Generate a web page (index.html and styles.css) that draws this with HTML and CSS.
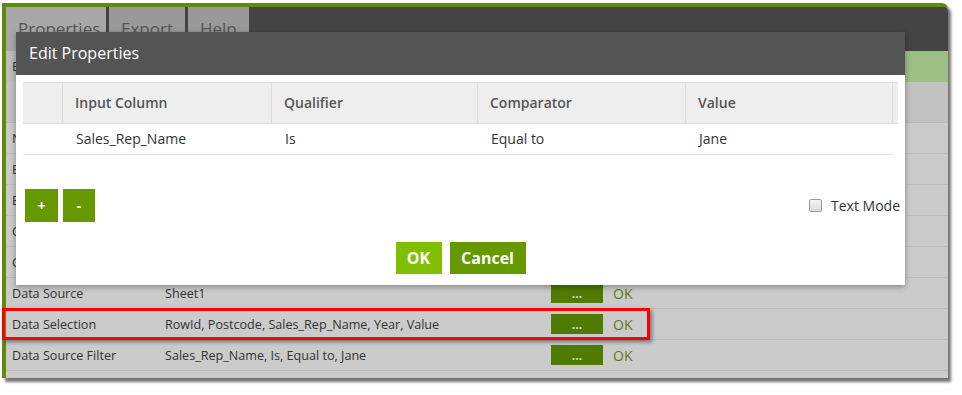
FILE: index.html
```html
<!DOCTYPE html>
<html lang="en">
<head>
  <meta charset="UTF-8">
  <title>Edit Properties</title>
  <link rel="stylesheet" href="styles.css">
</head>
<body>
  <div class="frame">
    <div class="topbar">
      <div class="tab tab-active">Properties</div>
      <div class="tab">Export</div>
      <div class="tab">Help</div>
    </div>
    <div class="titlebar">
      <div class="titlebar-name">Edit Node</div>
    </div>
    <div class="grid-head"></div>
    <div class="prop-row"><span class="prop-name">Name</span><span class="prop-value"></span></div>
    <div class="prop-row"><span class="prop-name">Enabled</span><span class="prop-value"></span></div>
    <div class="prop-row"><span class="prop-name">Execution</span><span class="prop-value"></span></div>
    <div class="prop-row"><span class="prop-name">Comment</span><span class="prop-value"></span></div>
    <div class="prop-row"><span class="prop-name">Cache</span><span class="prop-value"></span></div>
    <div class="prop-row">
      <span class="prop-name">Data Source</span><span class="prop-value">Sheet1</span>
      <span class="dots">...</span><span class="status">OK</span>
    </div>
    <div class="prop-row">
      <span class="prop-name">Data Selection</span><span class="prop-value">RowId, Postcode, Sales_Rep_Name, Year, Value</span>
      <span class="dots">...</span><span class="status">OK</span>
    </div>
    <div class="prop-row">
      <span class="prop-name">Data Source Filter</span><span class="prop-value">Sales_Rep_Name, Is, Equal to, Jane</span>
      <span class="dots">...</span><span class="status">OK</span>
    </div>

    <div class="highlight"></div>

    <div class="modal">
      <div class="modal-head">Edit Properties</div>
      <div class="modal-body">
        <div class="tbl-head">
          <div class="th"></div>
          <div class="th">Input Column</div>
          <div class="th">Qualifier</div>
          <div class="th">Comparator</div>
          <div class="th">Value</div>
          <div class="th"></div>
        </div>
        <div class="tbl-row">
          <div class="td"></div>
          <div class="td">Sales_Rep_Name</div>
          <div class="td">Is</div>
          <div class="td">Equal to</div>
          <div class="td">Jane</div>
        </div>
        <div class="controls">
          <div class="row-btns">
            <button class="sq-btn">+</button>
            <button class="sq-btn sq-minus">-</button>
          </div>
          <label class="text-mode"><input type="checkbox"> Text Mode</label>
        </div>
        <div class="footer">
          <button class="btn btn-ok">OK</button>
          <button class="btn btn-cancel">Cancel</button>
        </div>
      </div>
    </div>
  </div>
</body>
</html>
```

FILE: styles.css
```css
body {
  margin: 0;
  background: #fff;
  font-family: 'Open Sans', 'Noto Sans', sans-serif;
  width: 962px;
  height: 395px;
  overflow: hidden;
}
.frame {
  position: relative;
  margin: 3px 0 0 2px;
  width: 942px;
  height: 371px;
  border-top: 4px solid #5e8c0a;
  border-left: 4px solid #5e8c0a;
  border-top-right-radius: 6px;
  background: #cbcbcb;
  box-shadow: 3px 4px 3px rgba(0,0,0,0.55);
}
.topbar {
  display: flex;
  gap: 3px;
  height: 44px;
  background: #444;
  border-top-right-radius: 4px;
}
.tab {
  background: #999;
  color: #555;
  font-size: 17px;
  padding: 10px 12px 0 12px;
}
.tab-active {
  background: #a8a8a8;
  width: 76px;
}
.titlebar {
  height: 31px;
  background: #9dbf86;
  display: flex;
}
.titlebar-name {
  width: 150px;
  background: #bdbdbd;
  color: #333;
  font-size: 13px;
  line-height: 31px;
  padding-left: 6px;
}
.grid-head {
  height: 41px;
  background: #c2c2c2;
  border-bottom: 1px solid #b8b8b8;
  box-sizing: border-box;
}
.prop-row {
  display: grid;
  grid-template-columns: 153px 386px 52px auto;
  align-items: center;
  height: 31px;
  box-sizing: border-box;
  border-bottom: 1px solid #bdbdbd;
  padding-left: 6px;
  font-size: 12.6px;
  color: #333;
}
.dots {
  height: 20px;
  background: #4f7b00;
  color: #ddd;
  font-size: 12px;
  font-weight: bold;
  line-height: 22px;
  text-align: center;
}
.status {
  padding-left: 10px;
  color: #5f7a14;
  font-size: 14px;
}
.highlight {
  position: absolute;
  left: -4px;
  top: 301px;
  width: 648px;
  height: 32px;
  box-sizing: border-box;
  border: 3px solid #f00;
  box-shadow: 2px 2px 4px rgba(0,0,0,0.45);
}
.modal {
  position: absolute;
  left: 10px;
  top: 25px;
  width: 889px;
  height: 253px;
  background: #fff;
  box-shadow: 0 2px 6px rgba(0,0,0,0.35);
}
.modal-head {
  height: 43px;
  background: #545454;
  color: #fff;
  font-size: 16px;
  line-height: 43px;
  padding-left: 13px;
}
.modal-body {
  padding: 7px;
}
.tbl-head, .tbl-row {
  display: grid;
  grid-template-columns: 40px 209px 206px 208px 207px 5px;
}
.tbl-head {
  height: 42px;
  box-sizing: border-box;
  background: #eee;
  border-top: 1px solid #ddd;
  border-bottom: 1px solid #ddd;
}
.th {
  border-right: 1px solid #ddd;
  padding-left: 12px;
  font-size: 14px;
  font-weight: 600;
  color: #555;
  line-height: 40px;
}
.th:last-child { border-right: none; }
.tbl-row {
  grid-template-columns: 40px 209px 206px 208px 207px;
  width: 870px;
  height: 31px;
  box-sizing: border-box;
  border-bottom: 1px solid #e6e6e6;
}
.td {
  padding-left: 13px;
  font-size: 14px;
  color: #333;
  line-height: 30px;
}
.controls {
  display: flex;
  justify-content: space-between;
  align-items: center;
  margin-top: 34px;
  height: 33px;
}
.row-btns {
  display: flex;
  gap: 5px;
  margin-left: 2px;
}
.sq-btn {
  width: 33px;
  height: 33px;
  border: none;
  background: #669900;
  color: #fff;
  font-family: inherit;
  font-size: 14px;
  font-weight: bold;
  padding: 0;
}
.sq-minus { width: 32px; }
.text-mode {
  display: flex;
  align-items: center;
  gap: 9px;
  font-size: 14px;
  color: #333;
  margin-right: -2px;
}
.text-mode input {
  appearance: none;
  margin: 0;
  width: 13px;
  height: 13px;
  border: 1px solid #9a9a9a;
  border-radius: 2px;
  background: linear-gradient(#f4f4f4, #dcdcdc);
}
.footer {
  display: flex;
  justify-content: center;
  gap: 8px;
  margin-top: 20px;
}
.btn {
  height: 32px;
  border: none;
  color: #fff;
  font-family: inherit;
  font-size: 16px;
  font-weight: bold;
  padding: 0;
}
.btn-ok { width: 46px; background: #80bf00; }
.btn-cancel { width: 76px; background: #669900; }
```
